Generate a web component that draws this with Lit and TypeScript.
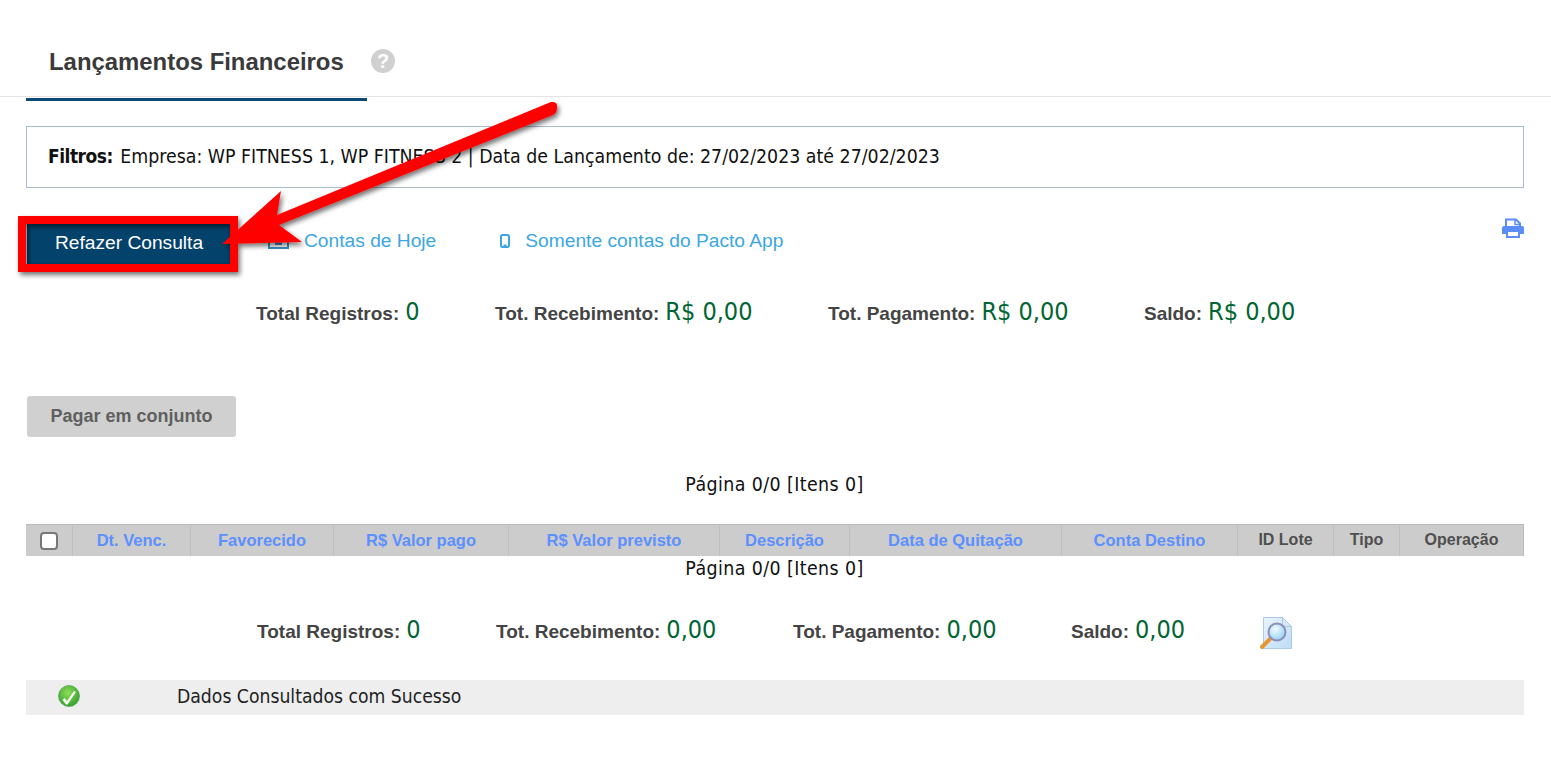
import { LitElement, html, css, svg } from "lit";
import { customElement } from "lit/decorators.js";

const headers: [string, boolean][] = [
  ["Dt. Venc.", true], ["Favorecido", true], ["R$ Valor pago", true], ["R$ Valor previsto", true],
  ["Descrição", true], ["Data de Quitação", true], ["Conta Destino", true],
  ["ID Lote", false], ["Tipo", false], ["Operação", false],
];

@customElement("app-root")
export class AppRoot extends LitElement {
  static styles = css`
    :host { display: block; position: relative; width: 1551px; height: 777px; background: #fff; overflow: hidden; font-family: "Liberation Sans", Arial, sans-serif; color: #333; }
    .head { height: 96px; border-bottom: 1px solid #e4e4e4; box-sizing: content-box; position: relative; display: flex; align-items: center; padding: 0 0 0 49px; }
    .title { font-size: 23.9px; font-weight: 700; color: #3a3a3a; margin-top: 28px; }
    .help { margin: 26px 0 0 27px; display: block; }
    .tab { position: absolute; left: 26px; top: 98px; width: 341px; height: 3px; background: #0a4a75; }
    .filter { margin: 29px 27px 0 26px; height: 60px; box-sizing: content-box; padding-bottom: 0; border: 1px solid #a9bdd0; display: flex; align-items: center; padding-left: 21px; font-family: "DejaVu Sans Condensed", "DejaVu Sans", sans-serif; font-size: 19.35px; color: #111; }
    .filter div { margin-top: -2px; }
    .filter b { font-weight: 700; font-size: 19px; letter-spacing: -.5px; margin-right: 2px; }
    .actions { margin: 34px 27px 0 27px; height: 43px; display: flex; align-items: center; position: relative; }
    .redo { width: 204px; height: 43px; box-sizing: border-box; padding-bottom: 2px; background: #03426b; color: #fff; font-size: 19.2px; display: flex; align-items: center; justify-content: center; box-shadow: inset 0 0 3px #0b2a40; }
    .link { color: #3ba7e2; font-size: 19.2px; display: flex; align-items: center; margin-top: -5px; }
    .today { margin-left: 37px; }
    .today svg { margin: -2px 15px 0 0; }
    .app { margin-left: 64px; }
    .app svg { margin-right: 15px; }
    .print { position: absolute; right: 0; top: -4px; }
    .totals { display: flex; align-items: baseline; font-weight: 700; font-size: 19px; color: #444; }
    .totals span.v { font-family: "DejaVu Sans Condensed", "DejaVu Sans", sans-serif; font-weight: 400; font-size: 25px; color: #006633; margin-left: 6px; }
    .t1 { margin: 32px 0 0 256px; height: 40px; }
    .t1 .a { width: 239px; } .t1 .b { width: 333px; } .t1 .c { width: 316px; }
    .pay { margin: 59px 0 0 27px; width: 209px; height: 41px; background: #d0d0d0; border-radius: 3px; color: #5f5f5f; font-weight: 700; font-size: 18px; display: flex; align-items: center; justify-content: center; }
    .pager { font-family: "DejaVu Sans Condensed", "DejaVu Sans", sans-serif; font-size: 19.4px; letter-spacing: .4px; color: #111; text-align: center; width: 1549px; }
    .p1 { margin-top: 36px; height: 24px; line-height: 24px; }
    .thead { margin: 27px 27px 0 26px; height: 32px; display: grid; grid-template-columns: 47px 118px 143px 175px 211px 130px 212px 176px 96px 66px 124px; background: #ccc; box-sizing: border-box; border-top: 1px solid #bbb; }
    .th { display: flex; align-items: center; justify-content: center; font-size: 16.5px; font-weight: 700; color: #4f4f4f; border-right: 1px solid #bfbfbf; }
    .th.s { color: #5c90ff; }
    .th.d { font-size: 16px; padding-bottom: 2px; box-sizing: border-box; }
    .th:last-child { border-right: 1px solid #bbb; }
    .box { width: 18px; height: 18px; box-sizing: border-box; background: #fff; border: 2px solid #777; border-radius: 4px; }
    .p2 { height: 24px; line-height: 24px; margin-top: 1px; }
    .t2 { margin: 34px 0 0 257px; height: 36px; align-items: baseline; position: relative; }
    .t2 .a { width: 239px; } .t2 .b { width: 297px; } .t2 .c { width: 278px; }
    .glass { position: absolute; left: 1003px; top: 1px; }
    .status { margin: 29px 27px 0 26px; height: 35px; box-sizing: border-box; padding-bottom: 3px; background: #eee; display: flex; align-items: center; font-family: "DejaVu Sans Condensed", "DejaVu Sans", sans-serif; font-size: 19.2px; color: #222; position: relative; padding-left: 31px; }
    .status span { margin-left: 96px; }
    .overlay { position: absolute; left: 0; top: 0; pointer-events: none; }
  `;

  render() {
    return html`
      <div class="head">
        <div class="title">Lançamentos Financeiros</div>
        <svg class="help" width="24" height="24" viewBox="0 0 24 24"><circle cx="12" cy="12" r="12" fill="#d0d0d0"/><text x="12" y="19" text-anchor="middle" font-family="Liberation Sans" font-weight="700" font-size="20" fill="#fff">?</text></svg>
      </div>
      <div class="tab"></div>
      <div class="filter"><div><b>Filtros:</b> Empresa: WP FITNESS 1, WP FITNESS 2 | Data de Lançamento de: 27/02/2023 até 27/02/2023</div></div>
      <div class="actions">
        <div class="redo">Refazer Consulta</div>
        <div class="link today">
          <svg width="21" height="18" viewBox="0 0 21 18"><path d="M1 3h19v14H1z" fill="none" stroke="#3a8fc0" stroke-width="2"/><path d="M1 2h19v5H1z" fill="#3a8fc0"/><rect x="7" y="9" width="7" height="5" fill="#3a8fc0"/></svg>
          Contas de Hoje
        </div>
        <div class="link app">
          <svg width="10" height="14" viewBox="0 0 10 14"><rect x="1" y="1" width="8" height="12" rx="1.5" fill="none" stroke="#3ba7e2" stroke-width="2"/><rect x="3.5" y="10.5" width="3" height="1.5" fill="#3ba7e2"/></svg>
          Somente contas do Pacto App
        </div>
        <svg class="print" width="22" height="20" viewBox="0 0 22 20"><path d="M4 9V1.5h10l4 4V9" fill="none" stroke="#5a8df5" stroke-width="2"/><path d="M13 1.5v5h5" fill="none" stroke="#5a8df5" stroke-width="1.5"/><path d="M2 8h18a2 2 0 0 1 2 2v6h-4v-3H4v3H0v-6a2 2 0 0 1 2-2z" fill="#5a8df5"/><path d="M5 13h12v6H5z" fill="#fff" stroke="#5a8df5" stroke-width="2"/></svg>
      </div>
      <div class="totals t1">
        <div class="a">Total Registros:<span class="v">0</span></div>
        <div class="b">Tot. Recebimento:<span class="v">R$ 0,00</span></div>
        <div class="c">Tot. Pagamento:<span class="v">R$ 0,00</span></div>
        <div>Saldo:<span class="v">R$ 0,00</span></div>
      </div>
      <div class="pay">Pagar em conjunto</div>
      <div class="pager p1">Página 0/0 [Itens 0]</div>
      <div class="thead">
        <div class="th"><div class="box"></div></div>
        ${headers.map(([t, s]) => html`<div class="th ${s ? "s" : "d"}">${t}</div>`)}
      </div>
      <div class="pager p2">Página 0/0 [Itens 0]</div>
      <div class="totals t2">
        <div class="a">Total Registros:<span class="v">0</span></div>
        <div class="b">Tot. Recebimento:<span class="v">0,00</span></div>
        <div class="c">Tot. Pagamento:<span class="v">0,00</span></div>
        <div>Saldo:<span class="v">0,00</span></div>
        <svg class="glass" width="34" height="34" viewBox="0 0 34 34">
          <defs>
            <linearGradient id="pg" x1="0" y1="0" x2="1" y2="1"><stop offset="0" stop-color="#eaf4fd"/><stop offset="1" stop-color="#bcdcf6"/></linearGradient>
            <radialGradient id="ln" cx=".4" cy=".35" r=".7"><stop offset="0" stop-color="#f4fbff"/><stop offset="1" stop-color="#8fd0f4"/></radialGradient>
          </defs>
          <path d="M3.5 1.5h19l9 9v22h-28z" fill="url(#pg)" stroke="#a9cbe8"/>
          <path d="M22.5 1.5v9h9z" fill="#d5e8f8" stroke="#a9cbe8"/>
          <path d="M2 31l9-9" stroke="#e8962e" stroke-width="4" stroke-linecap="round"/>
          <circle cx="17" cy="16" r="8.5" fill="url(#ln)" stroke="#8e8fb8" stroke-width="2"/>
        </svg>
      </div>
      <div class="status">
        <svg width="24" height="22" viewBox="0 0 24 22">
          <defs><radialGradient id="gc" cx=".45" cy=".35" r=".7"><stop offset="0" stop-color="#8ede5a"/><stop offset="1" stop-color="#2f9a2a"/></radialGradient></defs>
          <circle cx="12" cy="11" r="10.5" fill="url(#gc)" stroke="#5aa85a" stroke-width=".8"/>
          <path d="M5.5 15l2-2 2.5 3 7-10 2 1-8.5 12.5h-1.5z" fill="#f4fff0"/>
        </svg>
        <span>Dados Consultados com Sucesso</span>
      </div>
      <svg class="overlay" width="1551" height="777" viewBox="0 0 1551 777">
        <defs><filter id="sh" x="-10%" y="-10%" width="120%" height="120%"><feDropShadow dx="2" dy="3" stdDeviation="2.5" flood-color="#000" flood-opacity=".55"/></filter></defs>
        ${svg`<g filter="url(#sh)">
          <rect x="22" y="220" width="212" height="48" fill="none" stroke="#f00" stroke-width="8"/>
          <path d="M222 244 L281 191 L277 215 L551 102 Q558 101 557 108 Q557 113 553 115 L279 225 L302 242 Z" fill="#f00"/>
        </g>`}
      </svg>
    `;
  }
}
